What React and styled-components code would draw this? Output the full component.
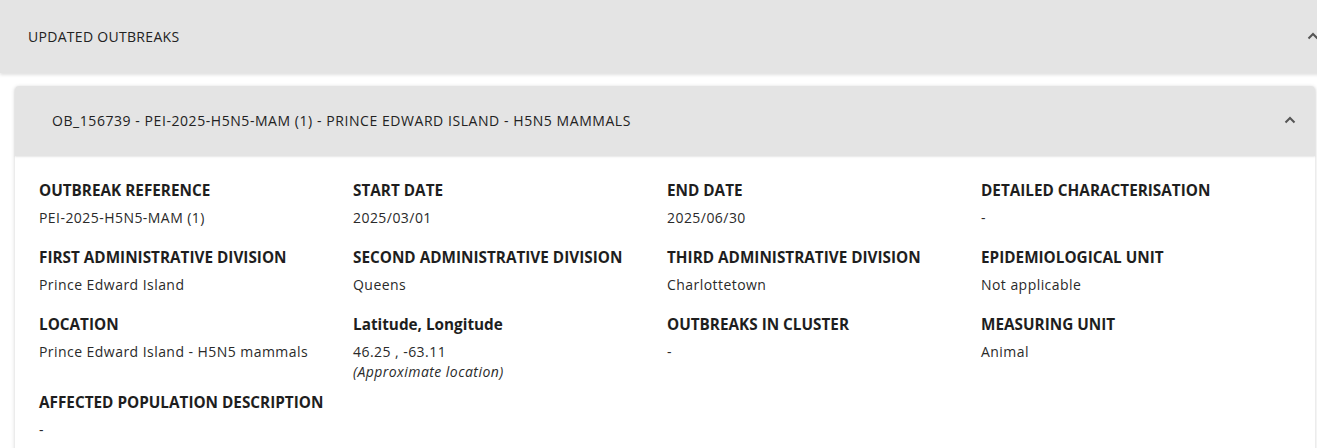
import React from "react";
import styled, { createGlobalStyle } from "styled-components";

const Global = createGlobalStyle`
  html, body { margin: 0; padding: 0; background: #fff; }
  body { font-family: "Open Sans", "Noto Sans", sans-serif; color: #222; overflow: hidden; }
`;

const Page = styled.div`
  width: 1317px;
  overflow: hidden;
`;

const Section = styled.section`
  width: 1326px;
`;

const SectionHeader = styled.div`
  height: 73px;
  background: #e4e4e4;
  display: flex;
  align-items: center;
  justify-content: space-between;
  padding: 0 7px 1px 28px;
  box-sizing: border-box;
  box-shadow: 0 2px 3px rgba(0,0,0,0.12);
  font-size: 14px;
  letter-spacing: 0.3px;
  color: #222;
`;

const SectionBody = styled.div`
  padding: 13px 11px 0 15px;
`;

const Card = styled.div`
  width: 1300px;
  border-radius: 4px;
  box-shadow: 0 1px 4px rgba(0,0,0,0.18);
  background: #fff;
`;

const CardHeader = styled.div`
  height: 70px;
  background: #e4e4e4;
  border-radius: 4px 4px 0 0;
  display: flex;
  align-items: center;
  justify-content: space-between;
  padding: 0 19px 2px 37px;
  box-sizing: border-box;
  font-size: 14px;
  letter-spacing: 0.56px;
  color: #222;
  box-shadow: 0 1px 2px rgba(0,0,0,0.1);
`;

const Grid = styled.div`
  display: grid;
  grid-template-columns: repeat(4, 314px);
  row-gap: 11px;
  padding: 24px 24px 20px 24px;
`;

const Field = styled.div`
  display: flex;
  flex-direction: column;
  min-height: 56px;
`;

const Label = styled.div`
  font-weight: 700;
  font-size: 15.3px;
  line-height: 20px;
  color: #1e1e1e;
  text-transform: ${(p) => (p.$plain ? "none" : "uppercase")};
`;

const Value = styled.div`
  font-size: 14px;
  line-height: 20px;
  letter-spacing: 0.45px;
  color: #2a2a2a;
  margin-top: 8px;
`;

const Note = styled.div`
  font-size: 14px;
  line-height: 19px;
  letter-spacing: 0.45px;
  font-style: italic;
  color: #2a2a2a;
`;

const Chevron = () => (
  <svg width="12" height="12" viewBox="0 0 12 12" fill="none">
    <path d="M1.5 8.5 L6 4 L10.5 8.5" stroke="#555" strokeWidth="2" />
  </svg>
);

const fields = [
  ["OUTBREAK REFERENCE", "PEI-2025-H5N5-MAM (1)"],
  ["START DATE", "2025/03/01"],
  ["END DATE", "2025/06/30"],
  ["DETAILED CHARACTERISATION", "-"],
  ["FIRST ADMINISTRATIVE DIVISION", "Prince Edward Island"],
  ["SECOND ADMINISTRATIVE DIVISION", "Queens"],
  ["THIRD ADMINISTRATIVE DIVISION", "Charlottetown"],
  ["EPIDEMIOLOGICAL UNIT", "Not applicable"],
  ["LOCATION", "Prince Edward Island - H5N5 mammals"],
  ["Latitude, Longitude", "46.25 , -63.11", "(Approximate location)", true],
  ["OUTBREAKS IN CLUSTER", "-"],
  ["MEASURING UNIT", "Animal"],
  ["AFFECTED POPULATION DESCRIPTION", "-"],
];

export default function App() {
  return (
    <Page>
      <Global />
      <Section>
        <SectionHeader>
          <span>UPDATED OUTBREAKS</span>
          <Chevron />
        </SectionHeader>
        <SectionBody>
          <Card>
            <CardHeader>
              <span>OB_156739 - PEI-2025-H5N5-MAM (1) - PRINCE EDWARD ISLAND - H5N5 MAMMALS</span>
              <Chevron />
            </CardHeader>
            <Grid>
              {fields.map(([label, value, note, plain]) => (
                <Field key={label}>
                  <Label $plain={plain}>{label}</Label>
                  <Value>{value}</Value>
                  {note && <Note>{note}</Note>}
                </Field>
              ))}
            </Grid>
          </Card>
        </SectionBody>
      </Section>
    </Page>
  );
}
